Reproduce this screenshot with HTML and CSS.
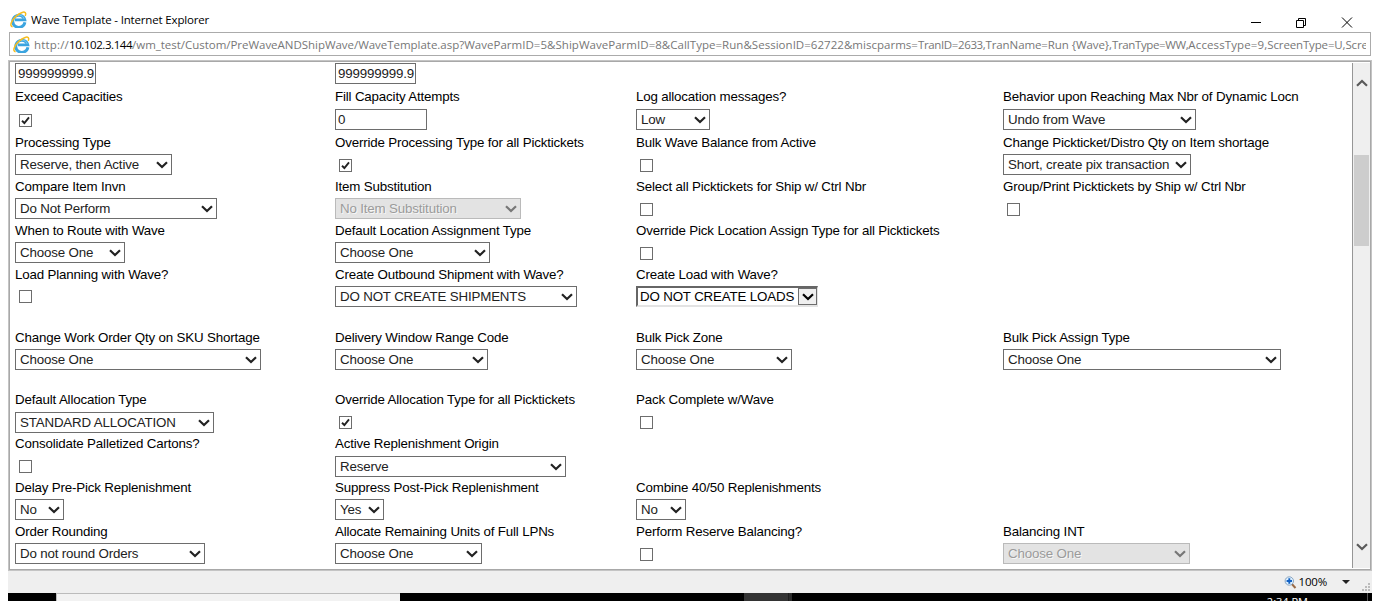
FILE: index.html
```
<!DOCTYPE html>
<html lang="en">
<head>
<meta charset="utf-8">
<title>Wave Template - Internet Explorer</title>
<link rel="stylesheet" href="styles.css">
</head>
<body>
<svg class="defs" aria-hidden="true">
  <symbol id="ie" viewBox="0 0 17 17">
    <path d="M14.9 11.2A6.1 6.1 0 1 1 14.8 8.9H5" fill="none" stroke="#3ba4df" stroke-width="2.9"/>
    <path d="M14.2 8A5.2 5.2 0 0 0 4.6 6.7" fill="none" stroke="#7accf2" stroke-width="1"/>
    <path d="M2.6 15.8C-.8 15.4 1.2 9.5 5.8 5.4C10 1.5 15.3-.4 15.7 2.6C15.8 3.5 15.5 4.2 15.2 5" fill="none" stroke="#f5bd20" stroke-width="1.5"/>
  </symbol>
  <symbol id="chev" viewBox="0 0 12 8"><path d="M1 1.2L6 6L11 1.2" fill="none" stroke="currentColor" stroke-width="2.2"/></symbol>
  <symbol id="tick" viewBox="0 0 11 11"><path d="M2 5.7L4.4 8L9 2.4" fill="none" stroke="#222" stroke-width="1.9"/></symbol>
</svg>
<div class="window">
  <header class="titlebar">
    <svg class="ie"><use href="#ie"/></svg>
    <span class="title">Wave Template - Internet Explorer</span>
    <svg class="winbtns" viewBox="0 0 104 12" fill="none" stroke="#000">
      <path d="M0 6.5H10"/><path d="M45.500 4.500h7v7h-7zM47.500 4.500v-2h7v7h-2"/><path d="M91 1.500L101 11.500M101 1.500L91 11.500"/>
    </svg>
  </header>
  <div class="address">
    <svg class="ie"><use href="#ie"/></svg>
    <div class="url"><span class="u-scheme">http://</span><b class="u-host">10.102.3.144</b><span class="u-path">/wm_test/Custom/PreWaveANDShipWave/WaveTemplate.asp</span><span class="u-query">?WaveParmID=5&amp;ShipWaveParmID=8&amp;CallType=Run&amp;SessionID=62722&amp;miscparms=</span><span class="u-id">TranID=2633,</span><span class="u-name">TranName=Run {Wave},</span><span class="u-id">TranType=WW,</span><span class="u-access">AccessType=9,</span><span class="u-screen">ScreenType=U,Scre</span></div>
  </div>
  <main class="frame">
    <div class="form" id="form"></div>
    <div class="scrollbar">
      <svg class="up"><use href="#chev"/></svg>
      <div class="thumb"></div>
      <svg class="down"><use href="#chev"/></svg>
    </div>
  </main>
  <footer class="status">
    <svg class="zoom" viewBox="0 0 13 13"><path d="M7.800 8L11.500 12" stroke="#9a6a45" stroke-width="2"/><circle cx="5.300" cy="5" r="4.200" fill="#dcefff" stroke="#8aa5c0"/><path d="M5.300 2.300v5.400M2.600 5h5.400" stroke="#1261c4" stroke-width="1.900"/></svg>
    <span class="pct">100%</span>
    <svg class="drop" viewBox="0 0 8 4"><path d="M0 0H8L4 4z" fill="#222"/></svg>
    <svg class="grip" viewBox="0 0 8 8" fill="#bbb"><path d="M6 0h2v2H6zM3 3h2v2H3zM6 3h2v2H6zM0 6h2v2H0zM3 6h2v2H3zM6 6h2v2H6z"/></svg>
  </footer>
  <div class="taskbar"><div class="search"></div><div class="task"></div><div class="task2"></div><span class="clock">2:34 PM</span><div class="edge"></div></div>
</div>
<script src="form.js"></script>
</body>
</html>
```
FILE: styles.css
```
* { box-sizing: border-box; }
body { margin: 0; background: #fff; overflow: hidden; }
.defs { position: absolute; width: 0; height: 0; }
.window { width: 1364px; height: 601px; margin-left: 8px; display: flex; flex-direction: column; font-family: "Open Sans", "Noto Sans", sans-serif; overflow: hidden; }
.titlebar { height: 32px; flex: none; display: flex; padding: 11px 17px 0 2px; }
.ie { width: 17px; height: 17px; flex: none; }
.title { font-size: 11.5px; line-height: 18px; margin-left: 4px; letter-spacing: -0.16px; white-space: nowrap; color: #000; }
.winbtns { width: 104px; height: 12px; margin-left: auto; margin-top: 5px; }
.address { height: 24px; flex: none; margin: 0 1px; border: 1px solid #ababab; display: flex; padding: 3px 4px 0 3px; }
.url { font-size: 11.5px; line-height: 18px; margin-left: 4px; white-space: nowrap; overflow: hidden; color: #777; flex: 1; }
.u-scheme { letter-spacing: 0.18px; }
.u-host { letter-spacing: -0.43px; font-weight: 400; color: #000; }
.u-path { letter-spacing: -0.03px; }
.u-query { letter-spacing: 0.03px; }
.u-id { letter-spacing: -0.37px; }
.u-name { letter-spacing: -0.085px; }
.u-access { letter-spacing: 0.12px; }
.u-screen { letter-spacing: -0.15px; }
.frame { height: 511px; flex: none; margin-top: 4px; border: 1px solid #c4c4c4; outline: 1px solid #a8a8a8; outline-offset: -2px; padding: 2px 1px 2px 2px; display: flex; }
.form { flex: 1; padding-left: 4px; display: grid; grid-template-columns: 320px 301px 367px 1fr; grid-template-rows: 25px 46px 44px 44px 44px 63px 62px 44px 44px 44px 40px; font-family: "Liberation Sans", Arial, sans-serif; font-size: 13.33px; letter-spacing: -0.165px; color: #000; }
.cell { white-space: nowrap; }
.label { height: 18px; line-height: 18px; margin-bottom: 2px; }
.low .label { margin-bottom: 3px; }
.field { height: 21px; border: 1px solid #6d6d6d; color: #222; line-height: 19px; padding-left: 4px; display: flex; align-items: center; justify-content: space-between; }
.input { padding-left: 2px; }
.chev { width: 12px; height: 8px; margin-right: 3px; flex: none; }
.disabled { background: #e3e3e3; border-color: #bababa; color: #9b9b9b; text-shadow: 1px 1px #f6f6f6; }
.disabled .chev { color: #777; }
.focused { border-width: 2px 1px 2px 2px; border-color: #666 #e3e3e3 #e3e3e3 #666; padding-left: 2px; color: #000; line-height: 17px; }
.focused .btn { width: 19px; height: 17px; border: 1px solid #6d6d6d; background: #efefef; display: flex; align-items: center; padding-left: 3px; }
.check { width: 13px; height: 13px; border: 1px solid #6d6d6d; margin: 7px 0 0 4px; }
.check svg { display: block; width: 11px; height: 11px; }
.low .check { margin-top: 8px; }
.high .check { margin-top: 6px; }
.low.high .check { margin-top: 7px; }
.scrollbar { width: 18px; background: #efefef; border-left: 1px solid #969696; display: flex; flex-direction: column; align-items: center; color: #5a5a5a; padding: 16px 0 17px 0; }
.up, .down { width: 12px; height: 8px; flex: none; }
.up { transform: rotate(180deg); }
.thumb { width: 15px; height: 91px; background: #cdcdcd; margin: 68px 0 auto; }
.status { height: 22px; flex: none; background: #efefef; display: flex; align-items: center; padding-right: 2px; }
.zoom { width: 13px; height: 13px; margin-left: auto; }
.pct { font-size: 11.5px; letter-spacing: -0.2px; margin: 0 15px 0 2px; line-height: 18px; color: #000; }
.drop { width: 8px; height: 4px; margin-right: 12px; }
.grip { width: 8px; height: 8px; align-self: flex-end; margin-bottom: 2px; }
.taskbar { flex: 1; min-height: 0; background: #000; display: flex; overflow: hidden; }
.search { width: 344px; margin-left: 48px; background: #f2f2f2; border: solid #bbb; border-width: 1px 0 0 1px; }
.task { width: 44px; margin-left: 344px; background: #333; }
.task2 { width: 4px; background: #2b2b2b; border-left: 1px solid #1d1d1d; }
.clock { color: #fff; font-size: 11px; line-height: 14px; margin-left: auto; margin-top: 2px; }
.edge { width: 1px; background: #555; margin: 0 4px 0 59px; }
```
FILE: form.js
```
// Each row: [label, kind, text or checked state, width, modifier]
const rows = [
  [["", "input", "999999999.9", 81], ["", "input", "999999999.9", 81], 0, 0],
  [["Exceed Capacities", "check", 1], ["Fill Capacity Attempts", "input", "0", 92], ["Log allocation messages?", "select", "Low", 74], ["Behavior upon Reaching Max Nbr of Dynamic Locn", "select", "Undo from Wave", 193]],
  [["Processing Type", "select", "Reserve, then Active", 157], ["Override Processing Type for all Picktickets", "check", 1], ["Bulk Wave Balance from Active", "check", 0], ["Change Pickticket/Distro Qty on Item shortage", "select", "Short, create pix transaction", 188]],
  [["Compare Item Invn", "select", "Do Not Perform", 202], ["Item Substitution", "select", "No Item Substitution", 186, "disabled"], ["Select all Picktickets for Ship w/ Ctrl Nbr", "check", 0], ["Group/Print Picktickets by Ship w/ Ctrl Nbr", "check", 0]],
  [["When to Route with Wave", "select", "Choose One", 110], ["Default Location Assignment Type", "select", "Choose One", 155], ["Override Pick Location Assign Type for all Picktickets", "check", 0], 0],
  [["Load Planning with Wave?", "check", 0], ["Create Outbound Shipment with Wave?", "select", "DO NOT CREATE SHIPMENTS", 242], ["Create Load with Wave?", "select", "DO NOT CREATE LOADS", 182, "focused"], 0],
  [["Change Work Order Qty on SKU Shortage", "select", "Choose One", 246], ["Delivery Window Range Code", "select", "Choose One", 153], ["Bulk Pick Zone", "select", "Choose One", 156], ["Bulk Pick Assign Type", "select", "Choose One", 278]],
  [["Default Allocation Type", "select", "STANDARD ALLOCATION", 199], ["Override Allocation Type for all Picktickets", "check", 1], ["Pack Complete w/Wave", "check", 0], 0],
  [["Consolidate Palletized Cartons?", "check", 0], ["Active Replenishment Origin", "select", "Reserve", 231], 0, 0],
  [["Delay Pre-Pick Replenishment", "select", "No", 49], ["Suppress Post-Pick Replenishment", "select", "Yes", 49], ["Combine 40/50 Replenishments", "select", "No", 50], 0],
  [["Order Rounding", "select", "Do not round Orders", 190], ["Allocate Remaining Units of Full LPNs", "select", "Choose One", 147], ["Perform Reserve Balancing?", "check", 0], ["Balancing INT", "select", "Choose One", 187, "disabled"]]
];
const low = [1, 7, 8], high = [5, 7, 8];
const chevron = '<svg class="chev"><use href="#chev"/></svg>';

function control([, kind, value, width, mod = ""]) {
  if (kind === "check") return `<div class="check">${value ? '<svg><use href="#tick"/></svg>' : ""}</div>`;
  const arrow = kind === "input" ? "" : mod === "focused" ? `<span class="btn">${chevron}</span>` : chevron;
  return `<div class="field ${kind} ${mod}" style="width:${width}px"><span>${value}</span>${arrow}</div>`;
}

document.getElementById("form").innerHTML = rows.map((row, i) => row.map(c => {
  if (!c) return "<div></div>";
  const label = c[0] ? `<div class="label">${c[0]}</div>` : "";
  return `<div class="cell ${low.includes(i) ? "low" : ""} ${high.includes(i) ? "high" : ""}">${label}${control(c)}</div>`;
}).join("")).join("");
```
